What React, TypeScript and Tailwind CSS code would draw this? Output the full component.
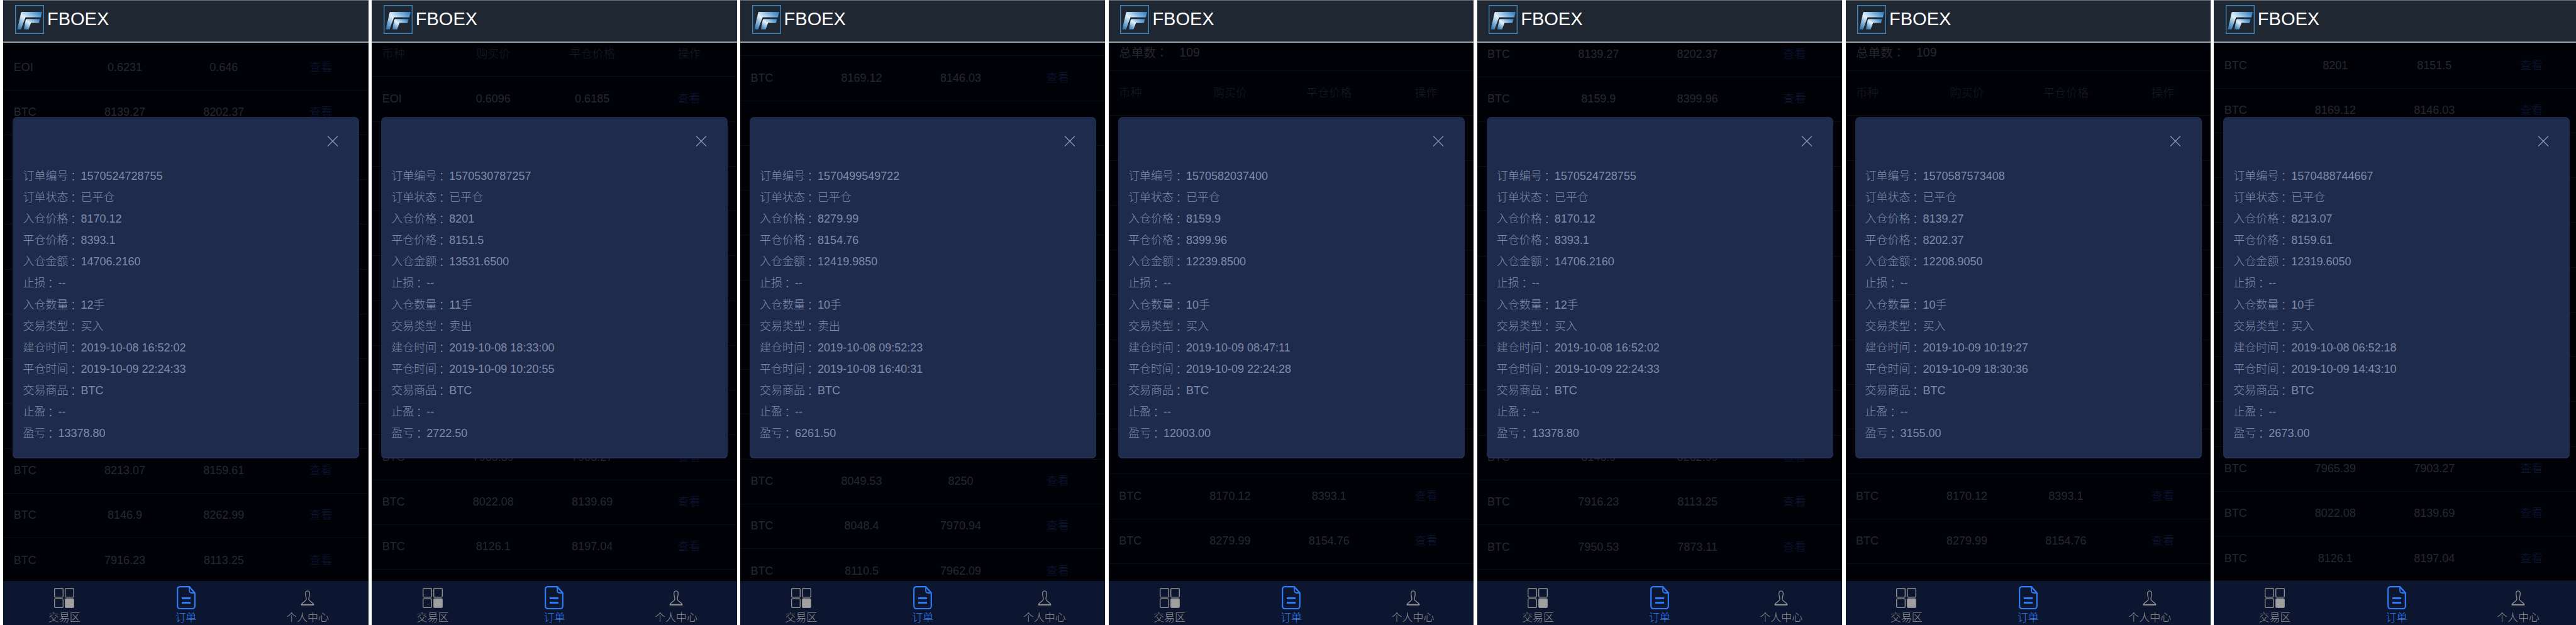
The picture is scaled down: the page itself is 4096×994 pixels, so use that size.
import { useId } from "react";

type Row = [string, string, string];

type Order = {
  id: string;
  open: string;
  close: string;
  amount: string;
  qty: string;
  side: string;
  openedAt: string;
  closedAt: string;
  pnl: string;
};

type Screen = {
  scroll: number;
  top: Row[];
  hidden: number;
  bottom: Row[];
  order: Order;
};

const order1: Order = {
  id: "1570524728755",
  open: "8170.12",
  close: "8393.1",
  amount: "14706.2160",
  qty: "12手",
  side: "买入",
  openedAt: "2019-10-08 16:52:02",
  closedAt: "2019-10-09 22:24:33",
  pnl: "13378.80",
};

const screens: Screen[] = [
  {
    scroll: 112,
    top: [
      ["EOI", "0.6231", "0.646"],
      ["BTC", "8139.27", "8202.37"],
    ],
    hidden: 7,
    bottom: [
      ["BTC", "8213.07", "8159.61"],
      ["BTC", "8146.9", "8262.99"],
      ["BTC", "7916.23", "8113.25"],
    ],
    order: order1,
  },
  {
    scroll: 62,
    top: [["EOI", "0.6096", "0.6185"]],
    hidden: 7,
    bottom: [
      ["BTC", "7965.39", "7903.27"],
      ["BTC", "8022.08", "8139.69"],
      ["BTC", "8126.1", "8197.04"],
    ],
    order: {
      id: "1570530787257",
      open: "8201",
      close: "8151.5",
      amount: "13531.6500",
      qty: "11手",
      side: "卖出",
      openedAt: "2019-10-08 18:33:00",
      closedAt: "2019-10-09 10:20:55",
      pnl: "2722.50",
    },
  },
  {
    scroll: 95,
    top: [["BTC", "8169.12", "8146.03"]],
    hidden: 8,
    bottom: [
      ["BTC", "8049.53", "8250"],
      ["BTC", "8048.4", "7970.94"],
      ["BTC", "8110.5", "7962.09"],
    ],
    order: {
      id: "1570499549722",
      open: "8279.99",
      close: "8154.76",
      amount: "12419.9850",
      qty: "10手",
      side: "卖出",
      openedAt: "2019-10-08 09:52:23",
      closedAt: "2019-10-08 16:40:31",
      pnl: "6261.50",
    },
  },
  {
    scroll: 0,
    top: [],
    hidden: 8,
    bottom: [
      ["BTC", "8170.12", "8393.1"],
      ["BTC", "8279.99", "8154.76"],
    ],
    order: {
      id: "1570582037400",
      open: "8159.9",
      close: "8399.96",
      amount: "12239.8500",
      qty: "10手",
      side: "买入",
      openedAt: "2019-10-09 08:47:11",
      closedAt: "2019-10-09 22:24:28",
      pnl: "12003.00",
    },
  },
  {
    scroll: 133,
    top: [
      ["BTC", "8139.27", "8202.37"],
      ["BTC", "8159.9", "8399.96"],
    ],
    hidden: 7,
    bottom: [
      ["BTC", "8146.9", "8262.99"],
      ["BTC", "7916.23", "8113.25"],
      ["BTC", "7950.53", "7873.11"],
    ],
    order: order1,
  },
  {
    scroll: 0,
    top: [],
    hidden: 8,
    bottom: [
      ["BTC", "8170.12", "8393.1"],
      ["BTC", "8279.99", "8154.76"],
    ],
    order: {
      id: "1570587573408",
      open: "8139.27",
      close: "8202.37",
      amount: "12208.9050",
      qty: "10手",
      side: "买入",
      openedAt: "2019-10-09 10:19:27",
      closedAt: "2019-10-09 18:30:36",
      pnl: "3155.00",
    },
  },
  {
    scroll: 115,
    top: [
      ["BTC", "8201", "8151.5"],
      ["BTC", "8169.12", "8146.03"],
    ],
    hidden: 7,
    bottom: [
      ["BTC", "7965.39", "7903.27"],
      ["BTC", "8022.08", "8139.69"],
      ["BTC", "8126.1", "8197.04"],
    ],
    order: {
      id: "1570488744667",
      open: "8213.07",
      close: "8159.61",
      amount: "12319.6050",
      qty: "10手",
      side: "买入",
      openedAt: "2019-10-08 06:52:18",
      closedAt: "2019-10-09 14:43:10",
      pnl: "2673.00",
    },
  },
];

const gridCols = "grid grid-cols-[97.9px_157.4px_157.4px_151px] items-center";

function Logo() {
  const id = useId();
  return (
    <svg viewBox="0 0 200 200" className="h-[46px] w-[46px] shrink-0">
      <defs>
        <linearGradient id={id} x1="0" y1="1" x2="1" y2="0.1">
          <stop offset="0" stopColor="#1c6aa8" />
          <stop offset="0.5" stopColor="#e3f2fc" />
          <stop offset="1" stopColor="#2f7fc4" />
        </linearGradient>
      </defs>
      <rect x="3" y="3" width="194" height="194" fill="none" stroke="#3f86bd" strokeWidth="6" />
      <path d="M46 48H187L178 85H72L41 168H15L40 58Q42 48 46 48Z" fill={`url(#${id})`} />
      <path d="M80 97H172L165 123H110L93 168H60L72 108Q74 97 80 97Z" fill={`url(#${id})`} />
    </svg>
  );
}

function CloseIcon() {
  return (
    <svg viewBox="0 0 18 17" className="h-[17px] w-[18px]" fill="none" stroke="#8f9ab6" strokeWidth="1.2">
      <path d="M1 0.5 17 16.5M17 0.5 1 16.5" />
    </svg>
  );
}

function TradeIcon() {
  return (
    <svg viewBox="0 0 32 32" className="h-[32px] w-[32px]" fill="none" stroke="#8e8e8e" strokeWidth="1.4">
      <rect x="0.7" y="0.7" width="13.6" height="14" rx="1.5" />
      <rect x="17.7" y="0.7" width="13.6" height="14" rx="1.5" />
      <rect x="0.7" y="17.3" width="13.6" height="14" rx="1.5" />
      <rect x="17.7" y="17.3" width="13.6" height="14" rx="1.5" fill="#a0a0a0" />
    </svg>
  );
}

function OrderIcon() {
  return (
    <svg viewBox="0 0 30 37" className="h-[37px] w-[30px]" fill="none" stroke="#2e7cf6" strokeWidth="2.2">
      <path d="M5 1.2H20L28.8 11V32A4 4 0 0 1 24.8 36H5A4 4 0 0 1 1.2 32V5A4 4 0 0 1 5 1.2Z" />
      <path d="M20 1.5V7.5A3.5 3.5 0 0 0 23.5 11H28.5" strokeWidth="1.8" />
      <path d="M8 19.5H22M8 26.5H22" strokeWidth="2.8" />
    </svg>
  );
}

function UserIcon() {
  return (
    <svg viewBox="0 0 24 24" className="h-[24px] w-[24px]" fill="none" stroke="#8e8e8e" strokeWidth="1.3">
      <path d="M12 0.8C9.5 0.8 8.6 3 8.7 5.5C8.8 9 10 11 10 14C10 17.5 4 18 2.2 22.5H21.8C20 18 14 17.5 14 14C14 11 15.2 9 15.3 5.5C15.4 3 14.5 0.8 12 0.8Z" />
      <path d="M2 23.3H22" />
    </svg>
  );
}

function Detail({ label, value }: { label: string; value: string }) {
  return (
    <div className="flex h-[34.1px] items-center whitespace-nowrap leading-[34.1px]">
      <span>{label}</span>
      <span className="-ml-px font-['Noto_Sans_CJK_TC',sans-serif]">：</span>
      <span className="ml-[3px]">{value}</span>
    </div>
  );
}

function OrderModal({ order }: { order: Order }) {
  return (
    <div className="absolute left-[15px] top-[186px] h-[543px] w-[551px] rounded-[7px] bg-[#1f2b4d] text-[18px] font-light text-[#7e8aa8] shadow-[inset_0_-2px_0_#27345a]">
      <div className="flex justify-end pr-[33px] pt-[30px]">
        <CloseIcon />
      </div>
      <div className="mt-[30px] pl-[16px]">
        <Detail label="订单编号" value={order.id} />
        <Detail label="订单状态" value="已平仓" />
        <Detail label="入仓价格" value={order.open} />
        <Detail label="平仓价格" value={order.close} />
        <Detail label="入仓金额" value={order.amount} />
        <Detail label="止损" value="--" />
        <Detail label="入仓数量" value={order.qty} />
        <Detail label="交易类型" value={order.side} />
        <Detail label="建仓时间" value={order.openedAt} />
        <Detail label="平仓时间" value={order.closedAt} />
        <Detail label="交易商品" value="BTC" />
        <Detail label="止盈" value="--" />
        <Detail label="盈亏" value={order.pnl} />
      </div>
    </div>
  );
}

function TableRow({ row }: { row?: Row }) {
  return (
    <div className={`${gridCols} h-[71.25px] border-b border-[#0c0e14] pl-[16.4px] text-[18px] text-[#27282d]`}>
      {row && (
        <>
          <span>{row[0]}</span>
          <span className="text-center">{row[1]}</span>
          <span className="text-center">{row[2]}</span>
          <span className="text-center font-light text-[#0c1737]">查看</span>
        </>
      )}
    </div>
  );
}

function Phone({ screen }: { screen: Screen }) {
  const rows: (Row | undefined)[] = [...screen.top, ...Array(screen.hidden).fill(undefined), ...screen.bottom];
  // rows scrolled up behind the header keep their height but draw no text
  const showTotal = screen.scroll < 25;
  const showColumns = screen.scroll < 90;
  return (
    <div className="relative flex h-full w-[580.35px] shrink-0 flex-col overflow-hidden bg-[#010208]">
      <header className="z-10 flex h-[68px] shrink-0 items-start gap-[5px] border-t border-b-2 border-t-[#6f747b] border-b-[#9aa1a9] bg-[#1f2733] pl-[18.5px] pt-[7px]">
        <Logo />
        <span className="text-[29px] leading-[44px] text-white">FBOEX</span>
      </header>

      <div className="min-h-0 flex-1 overflow-hidden">
        <div style={{ marginTop: -screen.scroll }}>
          <div className="flex h-[45px] items-start gap-[18px] border-b border-[#0c0e14] pl-[16.4px] text-[19.5px] leading-[30px] text-[#26272c]">
            {showTotal && (
              <>
                <span>
                  总单数<span className="font-['Noto_Sans_CJK_TC',sans-serif]">：</span>
                </span>
                <span>109</span>
              </>
            )}
          </div>
          <div className={`${gridCols} h-[71.25px] border-b border-[#0c0e14] pl-[16.4px] text-[18px] font-light text-[#1a1b21]`}>
            {showColumns && (
              <>
                <span>币种</span>
                <span className="text-center">购买价</span>
                <span className="text-center">平仓价格</span>
                <span className="text-center">操作</span>
              </>
            )}
          </div>
          {rows.map((row, i) => (
            <TableRow key={i} row={row} />
          ))}
        </div>
      </div>

      <nav className="grid h-[70px] shrink-0 grid-cols-3 bg-[#0d1630] text-[17px] font-light text-[#8e8e8e]">
        <div className="flex flex-col items-center pt-[8px]">
          <div className="flex h-[37px] items-center">
            <TradeIcon />
          </div>
          <span className="mt-px leading-[25px]">交易区</span>
        </div>
        <div className="flex flex-col items-center pt-[8px] text-[#2e7cf6]">
          <div className="flex h-[37px] items-center">
            <OrderIcon />
          </div>
          <span className="mt-px leading-[25px]">订单</span>
        </div>
        <div className="flex flex-col items-center pt-[8px]">
          <div className="flex h-[37px] items-center">
            <UserIcon />
          </div>
          <span className="mt-px leading-[25px]">个人中心</span>
        </div>
      </nav>

      <OrderModal order={screen.order} />
    </div>
  );
}

export default function App() {
  return (
    <div className="flex h-[994px] w-[4096px] gap-[5.47px] overflow-hidden bg-white pl-[5.47px] font-['Liberation_Sans','Noto_Sans_CJK_SC',sans-serif]">
      {screens.map((screen, i) => (
        <Phone key={i} screen={screen} />
      ))}
    </div>
  );
}
